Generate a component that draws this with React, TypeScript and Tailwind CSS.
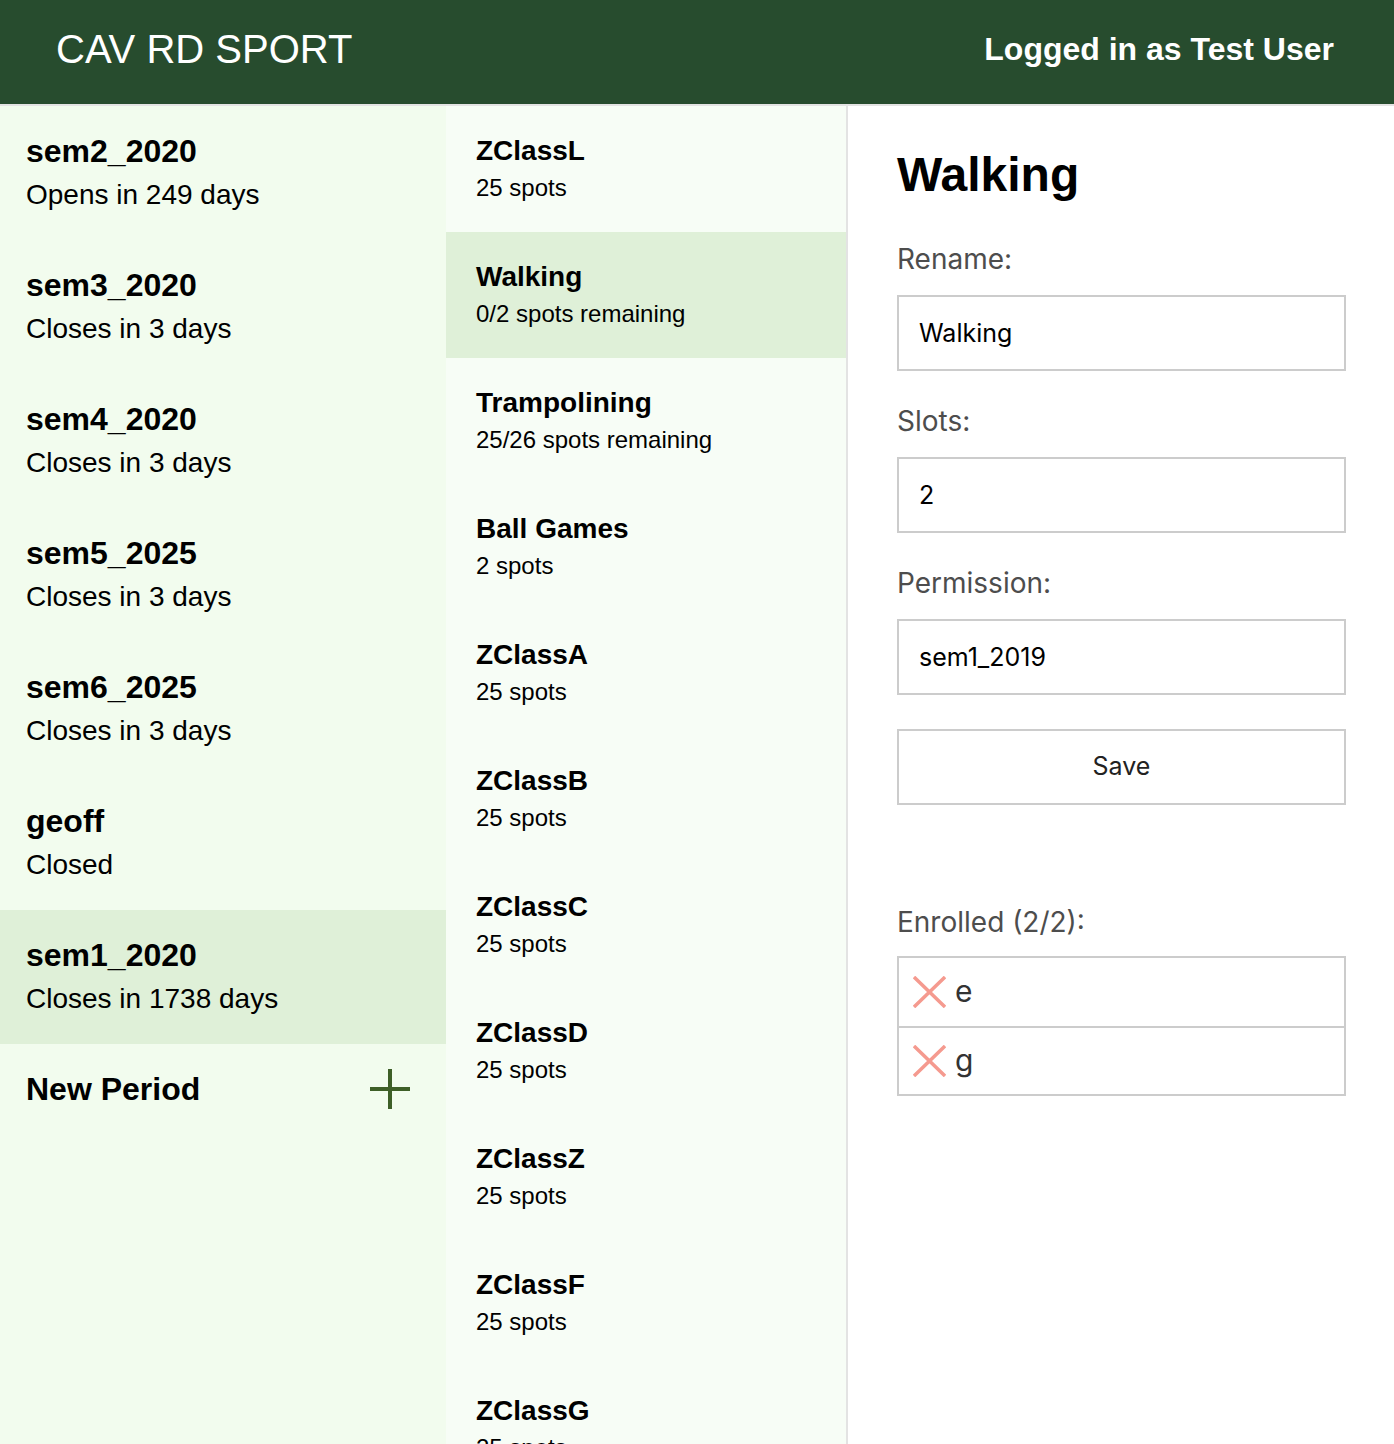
import React from "react";

const PERIODS = [
  { name: "sem2_2020", status: "Opens in 249 days" },
  { name: "sem3_2020", status: "Closes in 3 days" },
  { name: "sem4_2020", status: "Closes in 3 days" },
  { name: "sem5_2025", status: "Closes in 3 days" },
  { name: "sem6_2025", status: "Closes in 3 days" },
  { name: "geoff", status: "Closed" },
  { name: "sem1_2020", status: "Closes in 1738 days", active: true },
];

const CLASSES = [
  { name: "ZClassL", info: "25 spots" },
  { name: "Walking", info: "0/2 spots remaining", active: true },
  { name: "Trampolining", info: "25/26 spots remaining" },
  { name: "Ball Games", info: "2 spots" },
  { name: "ZClassA", info: "25 spots" },
  { name: "ZClassB", info: "25 spots" },
  { name: "ZClassC", info: "25 spots" },
  { name: "ZClassD", info: "25 spots" },
  { name: "ZClassZ", info: "25 spots" },
  { name: "ZClassF", info: "25 spots" },
  { name: "ZClassG", info: "25 spots" },
  { name: "ZClassH", info: "25 spots" },
];

const ENROLLED = ["e", "g"];

function PlusIcon() {
  return (
    <svg width="40" height="40" viewBox="0 0 40 40" aria-hidden>
      <path d="M20 0v40M0 20h40" stroke="#3e5f27" strokeWidth="4" fill="none" />
    </svg>
  );
}

function Cross() {
  return (
    <svg width="33" height="32" viewBox="0 0 33 32" aria-hidden>
      <path d="M1 1l31 30M32 1L1 31" stroke="#f59a8f" strokeWidth="3.5" fill="none" />
    </svg>
  );
}

function Field({ label, value }: { label: string; value: string }) {
  return (
    <>
      <label className="mt-[33px] block text-[28px] leading-[34px] text-[#4d4d4d] first:mt-0">
        {label}
      </label>
      <input
        readOnly
        value={value}
        className="mt-[19px] h-[76px] w-full border-2 border-[#cccccc] bg-white px-[20px] text-[25px] text-black outline-none"
      />
    </>
  );
}

export default function App() {
  return (
    <div className="flex h-screen flex-col overflow-hidden bg-white font-['Liberation_Sans',Arial,sans-serif] text-black">
      <header className="flex h-[106px] shrink-0 items-center justify-between border-b-2 border-[#e3e3e3] bg-[#274c2e] pb-[6px] pl-[56px] pr-[60px] text-white">
        <h1 className="text-[40px] font-normal">CAV RD SPORT</h1>
        <span className="text-[32px] font-bold">Logged in as Test User</span>
      </header>

      <div className="flex min-h-0 flex-1">
        {/* periods */}
        <aside className="w-[446px] shrink-0 overflow-hidden bg-[#f2fcee]">
          {PERIODS.map((p) => (
            <div
              key={p.name}
              className={
                "h-[134px] pl-[26px] pt-[27px] " + (p.active ? "bg-[#dff0d8]" : "")
              }
            >
              <div className="text-[32px] font-bold leading-[36px]">{p.name}</div>
              <div className="mt-[10px] text-[28px] leading-[32px]">{p.status}</div>
            </div>
          ))}
          <div className="flex h-[90px] items-center justify-between pl-[26px] pr-[36px]">
            <span className="text-[32px] font-bold leading-[36px]">New Period</span>
            <PlusIcon />
          </div>
        </aside>

        {/* classes */}
        <section className="w-[402px] shrink-0 overflow-hidden border-r-2 border-[#e3e3e3] bg-[#f7fdf6]">
          {CLASSES.map((c) => (
            <div
              key={c.name}
              className={
                "h-[126px] pl-[30px] pt-[29px] " + (c.active ? "bg-[#dff0d8]" : "")
              }
            >
              <div className="text-[28px] font-bold leading-[32px]">{c.name}</div>
              <div className="mt-[7px] text-[24px] leading-[28px]">{c.info}</div>
            </div>
          ))}
        </section>

        {/* detail */}
        <main className="flex-1 overflow-hidden pl-[49px] pr-[48px] pt-[41px]">
          <h2 className="text-[48px] font-bold leading-[56px]">Walking</h2>
          <div className="mt-[39px] flex flex-col font-['Inter',sans-serif]">
            <Field label="Rename:" value="Walking" />
            <Field label="Slots:" value="2" />
            <Field label="Permission:" value="sem1_2019" />
            <button className="mt-[34px] h-[76px] w-full border-2 border-[#cccccc] bg-white text-[25px] text-[#222]">
              Save
            </button>

            <label className="mt-[100px] block text-[28px] leading-[34px] text-[#4d4d4d]">
              Enrolled (2/2):
            </label>
            <ul className="mt-[17px] border-2 border-[#cccccc]">
              {ENROLLED.map((n, i) => (
                <li
                  key={n}
                  className={
                    "flex h-[68px] items-center gap-[9px] pl-[14px] " +
                    (i > 0 ? "border-t-2 border-[#cccccc]" : "")
                  }
                >
                  <Cross />
                  <span className="pb-[2px] text-[30px] text-[#333]">{n}</span>
                </li>
              ))}
            </ul>
          </div>
        </main>
      </div>
    </div>
  );
}
